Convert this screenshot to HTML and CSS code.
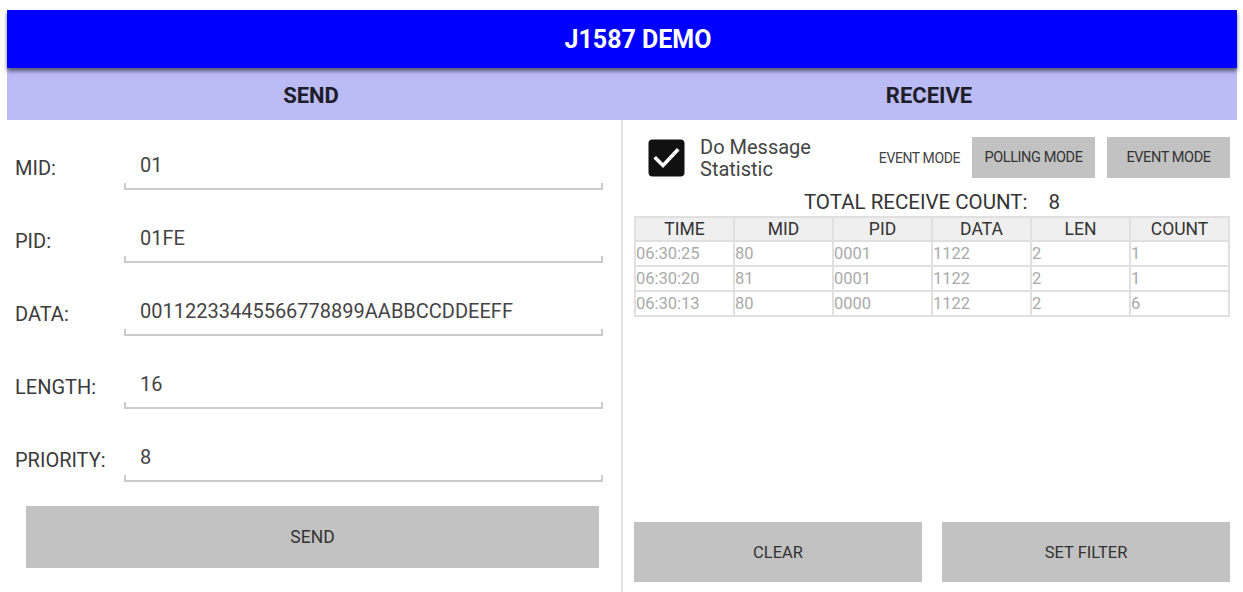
FILE: index.html
```html
<!DOCTYPE html>
<html lang="en">
<head>
  <meta charset="UTF-8" />
  <meta name="viewport" content="width=device-width, initial-scale=1.0" />
  <title>J1587 DEMO</title>
  <link rel="stylesheet" href="styles.css">
</head>

<body>
  <div class="app">
    <div class="title-bar">J1587 DEMO</div>

    <div class="tabs">
      <div class="tab">SEND</div>
      <div class="tab">RECEIVE</div>
    </div>

    <div class="panels">
      <!-- send side -->
      <div class="panel send-panel">
        <div class="form-row">
          <div class="form-label">MID:</div>
          <div class="field">01</div>
        </div>
        <div class="form-row">
          <div class="form-label">PID:</div>
          <div class="field">01FE</div>
        </div>
        <div class="form-row">
          <div class="form-label">DATA:</div>
          <div class="field">00112233445566778899AABBCCDDEEFF</div>
        </div>
        <div class="form-row">
          <div class="form-label">LENGTH:</div>
          <div class="field">16</div>
        </div>
        <div class="form-row">
          <div class="form-label">PRIORITY:</div>
          <div class="field">8</div>
        </div>
        <button class="btn send-btn">SEND</button>
      </div>

      <!-- receive side -->
      <div class="panel receive-panel">
        <div class="receive-top">
          <svg class="checkbox" width="37" height="38" viewBox="0 0 37 38">
            <rect x="0.5" y="0.5" width="36" height="37" rx="4" fill="#111"/>
            <path d="M8 19.5 L15 26.5 L29 11.5" fill="none" stroke="#fff" stroke-width="3.6" stroke-linecap="square"/>
          </svg>
          <div class="check-text">Do Message<br>Statistic</div>
          <div class="mode-label">EVENT MODE</div>
          <button class="btn mode-btn">POLLING MODE</button>
          <button class="btn mode-btn">EVENT MODE</button>
        </div>

        <div class="total">TOTAL RECEIVE COUNT:<span class="total-num">8</span></div>

        <table class="msg-table">
          <thead>
            <tr><th>TIME</th><th>MID</th><th>PID</th><th>DATA</th><th>LEN</th><th>COUNT</th></tr>
          </thead>
          <tbody>
            <tr><td>06:30:25</td><td>80</td><td>0001</td><td>1122</td><td>2</td><td>1</td></tr>
            <tr><td>06:30:20</td><td>81</td><td>0001</td><td>1122</td><td>2</td><td>1</td></tr>
            <tr><td>06:30:13</td><td>80</td><td>0000</td><td>1122</td><td>2</td><td>6</td></tr>
          </tbody>
        </table>

        <div class="bottom-btns">
          <button class="btn big-btn">CLEAR</button>
          <button class="btn big-btn">SET FILTER</button>
        </div>
      </div>
    </div>
  </div>
</body>
</html>
```

FILE: styles.css
```css
html, body {
  height: 100%;
}
body {
  margin: 0;
  padding: 10px 6px 0 7px;
  box-sizing: border-box;
  background: #fff;
  font-family: Roboto, "Liberation Sans", sans-serif;
  color: #333;
  overflow: hidden;
}
.app {
  display: flex;
  flex-direction: column;
  height: 582px;
}
.title-bar {
  position: relative;
  z-index: 1;
  height: 58px;
  padding-left: 32px;
  background: #0000ff;
  color: #fff;
  font-weight: 700;
  font-size: 25px;
  display: flex;
  align-items: center;
  justify-content: center;
  box-shadow: 0 3px 4px rgba(0, 0, 0, 0.55);
}
.tabs {
  display: flex;
  height: 52px;
  background: #bbbbf6;
}
.tab {
  flex: 1;
  display: flex;
  align-items: center;
  justify-content: center;
  padding-top: 3px;
  font-weight: 700;
  font-size: 22px;
  color: #1e1e2a;
}
.tab:first-child {
  flex: 0 0 614px;
  padding-right: 6px;
  box-sizing: border-box;
}
.panels {
  flex: 1;
  display: flex;
}
.panel {
  box-sizing: border-box;
}
.btn {
  border: none;
  background: #c2c2c2;
  color: #333;
  font-family: Roboto, "Liberation Sans", sans-serif;
  padding: 0;
  cursor: pointer;
}

/* send side */
.send-panel {
  width: 614px;
  padding: 30px 18px 0 8px;
  display: flex;
  flex-direction: column;
  gap: 33px;
}
.form-row {
  display: flex;
  align-items: flex-start;
}
.form-label {
  width: 109px;
  line-height: 30px;
  padding-top: 3px;
  font-size: 20px;
  color: #3a3a3a;
}
.field {
  flex: 1;
  line-height: 30px;
  padding: 0 0 8px 16px;
  font-size: 20px;
  color: #444;
  border-bottom: 2px solid #cbcbcb;
  background:
    linear-gradient(#cbcbcb, #cbcbcb) left bottom / 2px 5px no-repeat,
    linear-gradient(#cbcbcb, #cbcbcb) right bottom / 2px 5px no-repeat;
}
.send-btn {
  margin: -9px 4px 0 11px;
  height: 62px;
  font-size: 17.5px;
}

/* receive side */
.receive-panel {
  flex: 1;
  border-left: 2px solid #e2e2e2;
  padding: 17px 7px 10px 11px;
  display: flex;
  flex-direction: column;
}
.receive-top {
  display: flex;
  align-items: center;
  height: 41px;
}
.checkbox {
  margin-left: 14px;
}
.check-text {
  margin-left: 15px;
  font-size: 20px;
  line-height: 22px;
  color: #444;
}
.mode-label {
  margin-left: auto;
  margin-right: 12px;
  font-size: 14px;
  letter-spacing: -0.4px;
  color: #444;
}
.mode-btn {
  width: 123px;
  height: 41px;
  font-size: 14.5px;
  letter-spacing: -0.4px;
}
.mode-btn + .mode-btn {
  margin-left: 12px;
}
.total {
  margin-top: 12px;
  line-height: 24px;
  text-align: center;
  font-size: 20.5px;
  color: #333;
}
.total-num {
  margin-left: 21px;
}
.msg-table {
  margin-top: 2px;
  width: 596px;
  table-layout: fixed;
  border-collapse: separate;
  border-spacing: 2px;
  background: #e0e0e0;
}
.msg-table th {
  height: 22px;
  padding: 0;
  background: #efefef;
  font-weight: 400;
  font-size: 17.5px;
  color: #333;
}
.msg-table td {
  height: 23px;
  padding: 0;
  background: #fff;
  font-size: 16.5px;
  color: #aaa;
}
.bottom-btns {
  margin-top: auto;
  display: flex;
  gap: 20px;
}
.big-btn {
  flex: 1;
  height: 60px;
  font-size: 16.5px;
}
```
